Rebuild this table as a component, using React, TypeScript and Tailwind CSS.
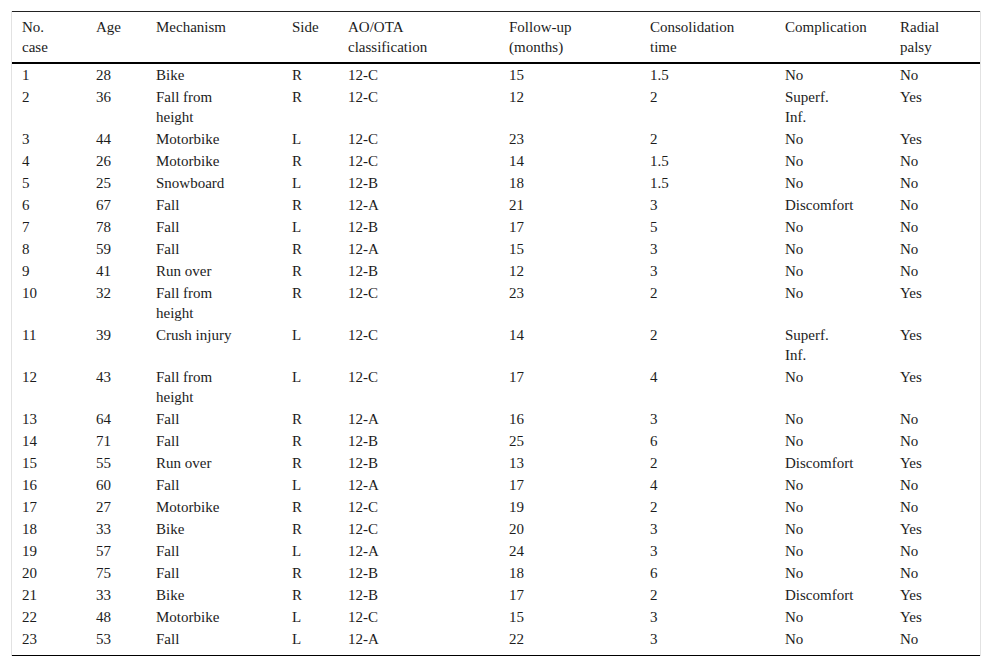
const COLS = "grid grid-cols-[74px_60px_136px_56px_161px_141px_135px_115px_91px]"

const HEAD = [
	"No.\ncase",
	"Age",
	"Mechanism",
	"Side",
	"AO/OTA\nclassification",
	"Follow-up\n(months)",
	"Consolidation\ntime",
	"Complication",
	"Radial\npalsy",
]

const ROWS: string[][] = [
	["1", "28", "Bike", "R", "12-C", "15", "1.5", "No", "No"],
	["2", "36", "Fall from\nheight", "R", "12-C", "12", "2", "Superf.\nInf.", "Yes"],
	["3", "44", "Motorbike", "L", "12-C", "23", "2", "No", "Yes"],
	["4", "26", "Motorbike", "R", "12-C", "14", "1.5", "No", "No"],
	["5", "25", "Snowboard", "L", "12-B", "18", "1.5", "No", "No"],
	["6", "67", "Fall", "R", "12-A", "21", "3", "Discomfort", "No"],
	["7", "78", "Fall", "L", "12-B", "17", "5", "No", "No"],
	["8", "59", "Fall", "R", "12-A", "15", "3", "No", "No"],
	["9", "41", "Run over", "R", "12-B", "12", "3", "No", "No"],
	["10", "32", "Fall from\nheight", "R", "12-C", "23", "2", "No", "Yes"],
	["11", "39", "Crush injury", "L", "12-C", "14", "2", "Superf.\nInf.", "Yes"],
	["12", "43", "Fall from\nheight", "L", "12-C", "17", "4", "No", "Yes"],
	["13", "64", "Fall", "R", "12-A", "16", "3", "No", "No"],
	["14", "71", "Fall", "R", "12-B", "25", "6", "No", "No"],
	["15", "55", "Run over", "R", "12-B", "13", "2", "Discomfort", "Yes"],
	["16", "60", "Fall", "L", "12-A", "17", "4", "No", "No"],
	["17", "27", "Motorbike", "R", "12-C", "19", "2", "No", "No"],
	["18", "33", "Bike", "R", "12-C", "20", "3", "No", "Yes"],
	["19", "57", "Fall", "L", "12-A", "24", "3", "No", "No"],
	["20", "75", "Fall", "R", "12-B", "18", "6", "No", "No"],
	["21", "33", "Bike", "R", "12-B", "17", "2", "Discomfort", "Yes"],
	["22", "48", "Motorbike", "L", "12-C", "15", "3", "No", "Yes"],
	["23", "53", "Fall", "L", "12-A", "22", "3", "No", "No"],
]

export default function App() {
	return (
		<main className="min-h-screen bg-white pt-[11px] pl-[11px] font-['Liberation_Serif'] text-[15px] leading-[20px] text-[#1c1c1c]">
			<div className="w-[970px] border-x border-[#e2e2e2]">
				{/* Header */}
				<div className={`${COLS} border-t border-[#222] border-b-2 border-b-black pt-[5px] pb-[5px]`}>
					{HEAD.map((h, i) => (
						<div key={i} className="pl-[10px] whitespace-pre-line font-['Liberation_Serif']">{h}</div>
					))}
				</div>

				{/* Body */}
				<div className="pb-[5px] border-b border-black">
					{ROWS.map((r, ri) => (
						<div key={ri} className={`${COLS} py-px`}>
							{r.map((c, ci) => (
								<div key={ci} className="pl-[10px] whitespace-pre-line font-['Liberation_Serif']">{c}</div>
							))}
						</div>
					))}
				</div>
			</div>
		</main>
	)
}
